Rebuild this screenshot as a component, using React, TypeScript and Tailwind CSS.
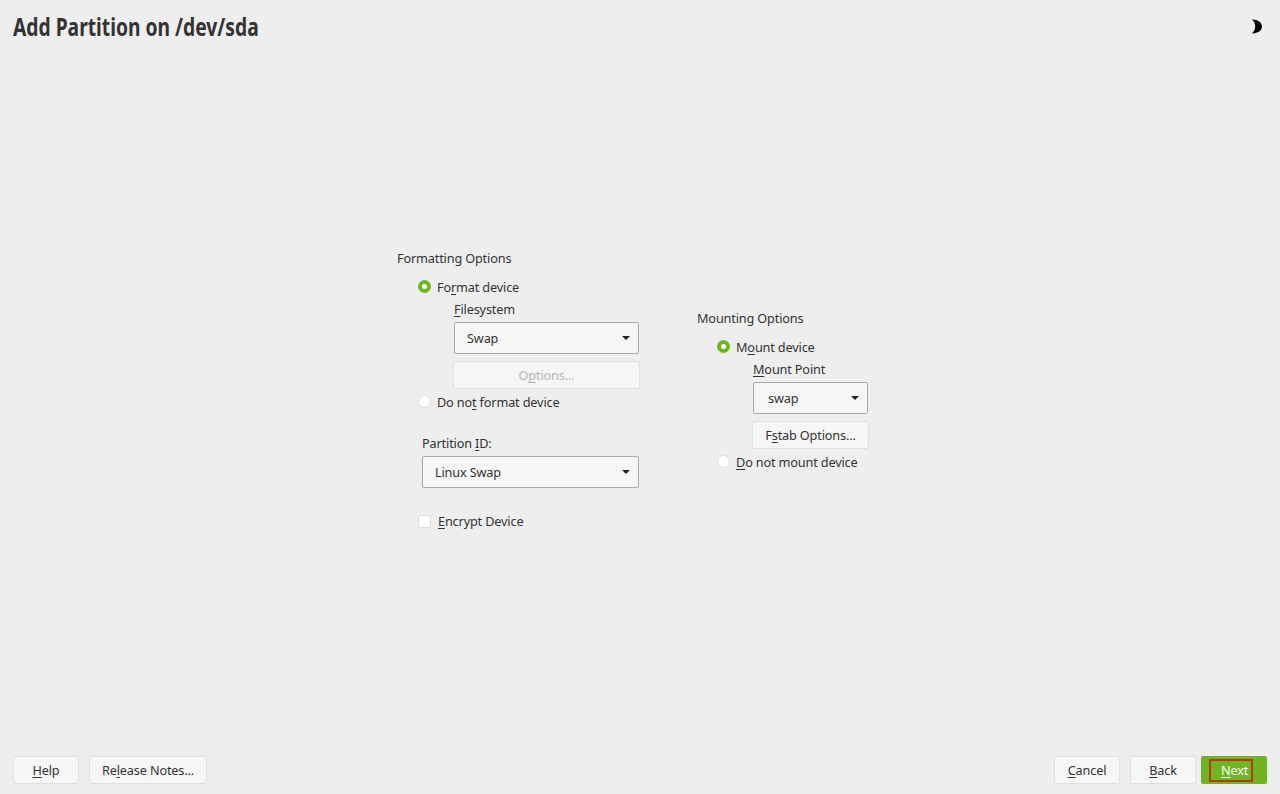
import type { ReactNode } from "react";

const uiFont = "font-['Noto_Sans','Open_Sans',sans-serif]";

function Mn({ children }: { children: ReactNode }) {
  return <span className="underline underline-offset-2 [text-decoration-skip-ink:none]">{children}</span>;
}

function Radio({ checked, label }: { checked?: boolean; label: ReactNode }) {
  return (
    <div className="flex h-5 items-center">
      {checked ? (
        <span className="-mt-px flex h-[13px] w-[13px] items-center justify-center rounded-full bg-[#6eb51f]">
          <span className="h-[5px] w-[5px] rounded-full bg-white" />
        </span>
      ) : (
        <span className="-mt-px h-[13px] w-[13px] rounded-full border border-[#dcdcdc] bg-white" />
      )}
      <span className="ml-[6px]">{label}</span>
    </div>
  );
}

function Combo({ value, width, inset = "pl-3" }: { value: string; width: string; inset?: string }) {
  return (
    <div className={`flex h-8 items-center justify-between rounded-[2px] border border-[#aaaaaa] bg-[#f6f6f6] pr-[8px] ${inset} ${width}`}>
      <span>{value}</span>
      <span className="h-0 w-0 border-x-[4px] border-t-[4px] border-x-transparent border-t-[#222222]" />
    </div>
  );
}

function Btn({ children, className = "" }: { children: ReactNode; className?: string }) {
  return (
    <div className={`flex h-7 items-center justify-center rounded-[2px] border border-[#e0e0e0] bg-[#f6f6f6] ${className}`}>
      {children}
    </div>
  );
}

export default function App() {
  return (
    <div className={`flex h-[794px] w-[1280px] flex-col overflow-hidden bg-[#eeeeee] text-[12.7px] leading-5 tracking-[-0.15px] text-[#333333] ${uiFont}`}>
      <header className="flex h-[54px] items-center justify-between pl-[13px] pr-[17px]">
        <h1 className="-mt-[2px] origin-left scale-x-[0.77] whitespace-nowrap text-[25px] font-bold tracking-normal text-[#333333]">Add Partition on /dev/sda</h1>
        <svg width="14" height="16" viewBox="0 0 14 16">
          <path d="M3 .6C8.500.4 13 3.500 13 7.500s-4.500 7.100-10 6.900C5.200 12.500 6.200 10 6.200 7.500S5.200 2.500 3 .6z" fill="#000" />
        </svg>
      </header>

      <main className="flex flex-1 items-start pl-[397px] pt-[194px]">
        <section className="w-[300px] shrink-0">
          <div className="h-5">Formatting Options</div>
          <div className="mt-[9px] pl-[21px]">
            <Radio checked label={<>Fo<Mn>r</Mn>mat device</>} />
            <div className="ml-[36px]">
              <div className="mt-[2px] h-5"><Mn>F</Mn>ilesystem</div>
              <div className="mt-[3px]"><Combo value="Swap" width="w-[185px]" /></div>
              <Btn className="-ml-px mt-[7px] w-[187px] text-[#b5b5b5]">O<Mn>p</Mn>tions...</Btn>
            </div>
            <div className="mt-[3px]">
              <Radio label={<>Do no<Mn>t</Mn> format device</>} />
            </div>
            <div className="ml-[4px]">
              <div className="mt-[21px] h-5">Partition <Mn>I</Mn>D:</div>
              <div className="mt-[3px]"><Combo value="Linux Swap" width="w-[217px]" /></div>
            </div>
            <div className="mt-[23px] flex h-5 items-center">
              <span className="mt-px h-[13px] w-[13px] rounded-[2px] border border-[#dcdcdc] bg-white" />
              <span className="ml-[7px]"><Mn>E</Mn>ncrypt Device</span>
            </div>
          </div>
        </section>

        <section className="mt-[60px]">
          <div className="h-5">Mounting Options</div>
          <div className="mt-[9px] pl-[20px]">
            <Radio checked label={<>M<Mn>o</Mn>unt device</>} />
            <div className="ml-[36px]">
              <div className="mt-[2px] h-5"><Mn>M</Mn>ount Point</div>
              <div className="mt-[3px]"><Combo value="swap" width="w-[115px]" inset="pl-[14px]" /></div>
              <Btn className="-ml-px mt-[7px] w-[117px]">F<Mn>s</Mn>tab Options...</Btn>
            </div>
            <div className="mt-[3px]">
              <Radio label={<><Mn>D</Mn>o not mount device</>} />
            </div>
          </div>
        </section>
      </main>

      <footer className="flex items-center justify-between pb-[10px] pl-[13px] pr-[13px]">
        <div className="flex gap-[10px]">
          <Btn className="w-[66px]"><Mn>H</Mn>elp</Btn>
          <Btn className="w-[118px]">Re<Mn>l</Mn>ease Notes...</Btn>
        </div>
        <div className="flex">
          <Btn className="w-[66px]"><Mn>C</Mn>ancel</Btn>
          <Btn className="ml-[10px] w-[66px]"><Mn>B</Mn>ack</Btn>
          <div className="ml-[5px] flex h-7 w-[66px] items-center justify-center rounded-[2px] bg-[#6eb51f] text-white">
            <div className="-ml-[6px] flex h-[23px] w-[44px] items-center border-2 border-[#b5371c] pl-[10px]">
              <span><Mn>N</Mn>ext</span>
            </div>
          </div>
        </div>
      </footer>
    </div>
  );
}
